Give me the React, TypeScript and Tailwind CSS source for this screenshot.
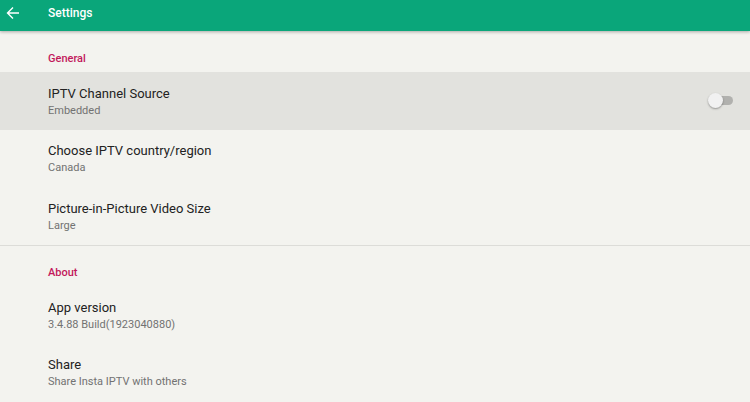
import React from 'react';

interface Pref {
  title: string;
  summary: string;
  selected?: boolean;
  toggle?: boolean;
}

const general: Pref[] = [
  { title: 'IPTV Channel Source', summary: 'Embedded', selected: true, toggle: true },
  { title: 'Choose IPTV country/region', summary: 'Canada' },
  { title: 'Picture-in-Picture Video Size', summary: 'Large' },
];

const about: Pref[] = [
  { title: 'App version', summary: '3.4.88 Build(1923040880)' },
  { title: 'Share', summary: 'Share Insta IPTV with others' },
];

const Row: React.FC<{ pref: Pref }> = ({ pref }) => (
  <div
    className={`h-[57.5px] flex items-center pl-12 pr-[17px] ${
      pref.selected ? 'bg-[#e2e2de]' : ''
    }`}
  >
    <div className="flex-1 flex flex-col pt-[2px]">
      <span className="text-[13px] leading-[16px] text-[#222]">{pref.title}</span>
      <span className="text-[11px] leading-[15px] text-[#727272] mt-[1px]">{pref.summary}</span>
    </div>
    {pref.toggle && (
      <div className="relative w-[26px] h-[15px] flex items-center">
        <div className="absolute right-0 w-[22px] h-[9px] rounded-full bg-[#b1b1ae]" />
        <div className="absolute left-[1px] w-[15px] h-[15px] rounded-full bg-[#f1f1f1] shadow-[0_1px_2px_rgba(0,0,0,0.35)]" />
      </div>
    )}
  </div>
);

const Header: React.FC<{ label: string }> = ({ label }) => (
  <div className="h-[29px] flex items-center pt-[3px] pl-12 text-[11px] font-medium text-[#c2185b]">{label}</div>
);

export default function App() {
  return (
    <div
      className="w-[750px] h-[402px] overflow-hidden bg-[#f3f3ef] flex flex-col"
      style={{ fontFamily: 'Roboto, "Noto Sans", sans-serif' }}
    >
      <div className="h-[31px] shrink-0 bg-[#0aa67a] flex items-center pb-[5px] shadow-[0_1px_3px_rgba(0,0,0,0.3)] relative z-10">
        <svg width="14" height="14" viewBox="0 0 14 14" className="ml-[6px]" fill="none">
          <path d="M13 7H1.5M7 1.5L1.5 7 7 12.5" stroke="#fff" strokeWidth="1.4" />
        </svg>
        <span className="ml-[28px] text-[12px] font-medium text-white">Settings</span>
      </div>
      <div className="pt-[12px]">
        <Header label="General" />
        {general.map((p) => (
          <Row key={p.title} pref={p} />
        ))}
      </div>
      <div className="h-[1.5px] bg-[#dcdcd8]" />
      <div className="pt-[11px]">
        <Header label="About" />
        {about.map((p) => (
          <Row key={p.title} pref={p} />
        ))}
      </div>
    </div>
  );
}
